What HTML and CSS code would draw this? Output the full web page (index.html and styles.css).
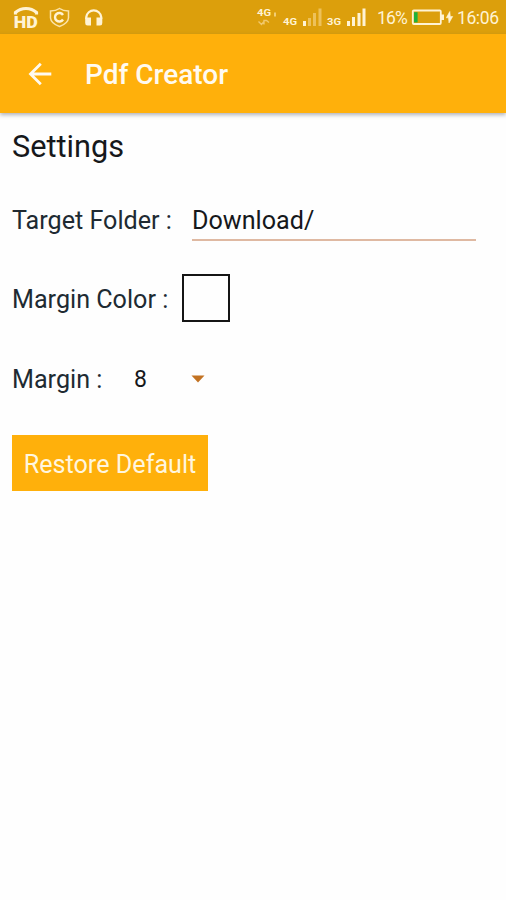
FILE: index.html
```html
<!DOCTYPE html>
<html lang="en">
<head>
<meta charset="utf-8">
<title>Pdf Creator</title>
<link rel="stylesheet" href="styles.css">
</head>
<body>
<div class="status">
  <svg class="notes" width="104" height="34" viewBox="0 0 104 34" fill="none">
    <path d="M15.500 14.500V12.500Q20 8.500 26 8.500T36.500 12.500V14.500" stroke="#fff3d4" stroke-width="3.200"/>
    <text x="13.700" y="28" class="hd" textLength="24" lengthAdjust="spacingAndGlyphs">HD</text>
    <path d="M59.500 8.500Q63 11 68.500 11V18Q68 23.500 59.500 26.500Q51 23.500 50.500 18V11Q56 11 59.500 8.500Z" stroke="#fbe3a8" stroke-width="1.500"/>
    <path d="M63 15A4.300 4.300 0 1 0 63 19.500" stroke="#fff3d4" stroke-width="2.400"/>
    <path d="M86.300 19V17A7.500 7.500 0 0 1 101.200 17V19" stroke="#fff3d4" stroke-width="2.200"/>
    <path d="M85.200 17.500H91V25.500H87.500Q85.200 25.500 85.200 23ZM96.500 17.500H102.300V23Q102.300 25.500 100 25.500H96.500Z" fill="#fff3d4"/>
  </svg>
  <svg class="signal" width="116" height="34" viewBox="254 0 116 34">
    <text x="257" y="16" class="net" textLength="14" lengthAdjust="spacingAndGlyphs">4G</text>
    <path d="M275 12.500V16.500" stroke="#f8dc98" stroke-width="1.500"/>
    <path d="M258.500 21.500L261.500 24.500L264 21.500M264 24.500V20.500H266.500L269 22.500" stroke="#f1c86c" stroke-width="1.400" fill="none"/>
    <text x="283" y="25" class="net" textLength="14" lengthAdjust="spacingAndGlyphs">4G</text>
    <path d="M303 21H306V26H303Z" fill="#fff3d4"/>
    <path d="M308 18H311V26H308ZM313 13H316V26H313ZM318.500 8.500H321.500V26H318.500Z" fill="#edc15a"/>
    <text x="327" y="25" class="net" textLength="14" lengthAdjust="spacingAndGlyphs">3G</text>
    <path d="M347 21H350V26H347ZM352 17H355V26H352ZM357.500 13H360.500V26H357.500ZM362.500 8.500H365.500V26H362.500Z" fill="#fff3d4"/>
  </svg>
  <span class="percent">16%</span>
  <svg class="battery" width="44" height="34" viewBox="410 0 44 34">
    <rect x="412.800" y="10.500" width="28" height="13.500" rx="1" fill="none" stroke="#fff3d4" stroke-width="1.800"/>
    <rect x="414" y="12.200" width="3.600" height="10.200" fill="#20b23c"/>
    <path d="M441 14.500H444V20H441Z" fill="#fff3d4"/>
    <path d="M449.800 11.500L446.300 17.800H448.500L449 23L452.700 16.500H450.300Z" fill="#fff3d4" stroke="#fff3d4" stroke-width=".6"/>
  </svg>
  <span class="time">16:06</span>
</div>
<header class="appbar">
  <svg class="back" width="24" height="24" viewBox="0 0 24 24" fill="none" stroke="#fffaf0" stroke-width="2.800"><path d="M23.300 12H2.500M12.800 1.800L2.500 12L12.800 22.200"/></svg>
  <h1 class="title">Pdf Creator</h1>
</header>
<main class="settings">
  <h2 class="heading">Settings</h2>
  <div class="row folder-row"><span class="label folder-label">Target Folder :</span><span class="field">Download/</span></div>
  <div class="row color-row"><span class="label color-label">Margin Color :</span><span class="swatch"></span></div>
  <div class="row margin-row"><span class="label margin-label">Margin :</span><span class="value">8</span><svg width="14" height="8" viewBox="0 0 14 8"><path d="M0.500 0.500H13.500L7 7.500Z" fill="#c27222"/></svg></div>
  <button class="restore">Restore Default</button>
</main>
</body>
</html>
```

FILE: styles.css
```css
* { box-sizing: border-box; }
body {
  margin: 0;
  height: 900px;
  overflow: hidden;
  background: #fefefe;
  color: #16181b;
  font-family: Roboto, "Liberation Sans", sans-serif;
}
.status {
  display: flex;
  height: 34px;
  background: #dc9f0c;
  color: #fff3d4;
  font-size: 17.500px;
  line-height: 36px;
  white-space: nowrap;
}
.status svg { flex: none; }
.notes { margin-right: 150px; }
.hd { font-size: 16px; font-weight: 900; fill: #fff3d4; }
.net { font-size: 9.500px; font-weight: 700; fill: #fff3d4; }
.percent { width: 33px; margin: 0 0 0 7px; letter-spacing: -.8px; }
.time { margin-left: 3px; letter-spacing: -.4px; }
.appbar {
  display: flex;
  align-items: center;
  height: 79px;
  padding: 0 28px;
  background: #ffb00b;
  box-shadow: 0 2px 4px rgba(60, 65, 80, .4);
}
.title {
  margin: 2px 0 0 33px;
  color: #fffaf0;
  font-size: 28px;
  font-weight: 500;
  line-height: 36px;
}
.settings { padding: 14px 12px 0; }
.heading {
  margin: 0;
  font-size: 30.700px;
  font-weight: 400;
  line-height: 40px;
}
.row {
  display: flex;
  align-items: center;
  font-size: 25.150px;
  white-space: nowrap;
}
.label { color: #202a32; }
.folder-row { height: 44px; margin-top: 30px; align-items: flex-start; line-height: 48px; }
.folder-label { width: 180px; }
.field {
  width: 284px;
  height: 44px;
  border-bottom: 2px solid #dfb9a2;
}
.color-row { height: 48px; margin-top: 33px; }
.color-label { width: 170px; padding-top: 2px; }
.swatch { width: 48px; height: 48px; border: 2px solid #151515; }
.margin-row { height: 40px; margin-top: 37px; }
.margin-label { width: 122px; }
.value { width: 57px; font-size: 23px; }
.restore {
  display: block;
  width: 196px;
  height: 56px;
  margin-top: 35.500px;
  padding: 4px 0 0;
  border: 0;
  background: #ffb00b;
  color: #fff6df;
  font: 25.200px/50px Roboto, "Liberation Sans", sans-serif;
  white-space: nowrap;
}
```
